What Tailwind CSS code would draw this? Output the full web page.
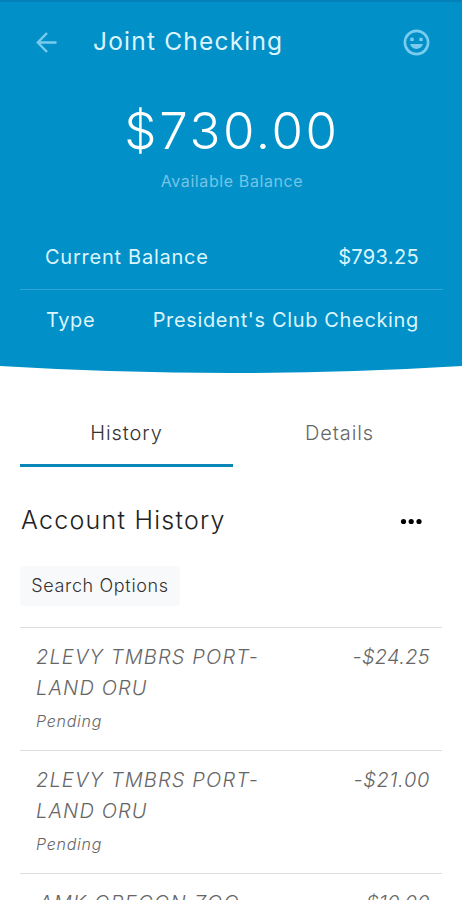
<!DOCTYPE html>
<html lang="en">

<head>
    <meta charset="UTF-8">
    <meta name="viewport" content="width=device-width, initial-scale=1.0">
    <title>Joint Checking</title>
    <script src="https://cdn.jsdelivr.net/npm/@tailwindcss/browser@4"></script>
</head>

<body class="bg-white font-['Inter','Open_Sans',sans-serif] h-[900px] overflow-hidden">

    <header class="bg-[#0290c8] border-t-2 border-[#0581b9] h-[366px] flex flex-col text-[#dcf5fd]">
        <div class="h-20 pl-[35px] pr-[30px] flex items-center">
            <svg class="size-6 text-[#7accee]" viewBox="0 0 24 24" fill="none" stroke="currentColor" stroke-width="2.400">
                <path d="M21.500 12.500H3.500M12 3L2.800 12.500l9.200 9.500" />
            </svg>
            <h1 class="ml-[34px] pb-[2px] text-[24.5px] tracking-[1.2px] whitespace-nowrap">Joint Checking</h1>
            <svg class="ml-auto size-[31px] text-[#7accee]" viewBox="0 0 24 24" fill="currentColor">
                <path d="M12 2a10 10 0 1 0 0 20 10 10 0 0 0 0-20zm0 18a8 8 0 1 1 0-16 8 8 0 0 1 0 16z" />
                <path d="M7.200 8.300h2.600v2.600H7.200zM14.200 8.300h2.600v2.600h-2.600zM7 13.200h10c-.6 2.400-2.500 3.800-5 3.800s-4.400-1.400-5-3.800z" />
            </svg>
        </div>

        <div class="pt-[18px] text-center">
            <p class="pl-[2px] text-[51px] leading-[62px] tracking-[2.6px] font-light text-white">$730.00</p>
            <p class="mt-[7px] pl-[2px] text-base leading-6 tracking-[0.6px] text-[#74c4e6]">Available Balance</p>
        </div>

        <div class="ml-5 mr-[19px] mt-[31px] text-[20px]">
            <div class="h-[66px] pl-[25px] pr-6 flex items-center justify-between border-b border-[#2ea5d5]">
                <span class="tracking-[0.75px]">Current Balance</span>
                <span class="tracking-[0.35px]">$793.25</span>
            </div>
            <div class="h-[60px] pl-[26px] pr-6 flex items-center justify-between">
                <span class="tracking-[0.6px]">Type</span>
                <span class="tracking-[0.65px]">President's Club Checking</span>
            </div>
        </div>
    </header>
    <svg class="block w-full h-2" viewBox="0 0 462 8" preserveAspectRatio="none">
        <path d="M0 0Q231 14 462 0z" fill="#0290c8" />
    </svg>

    <main class="px-5 pt-[26px] text-[#333]">
        <nav class="grid grid-cols-2 text-center text-[20px] tracking-[0.9px] mr-[-4px]">
            <a class="h-[67px] pt-[17px] leading-8 font-light border-b-[3px] border-[#0a85b7]">History</a>
            <a class="h-[67px] pt-[17px] leading-8 font-light text-[#666]">Details</a>
        </nav>

        <div class="mt-[34px] h-10 flex items-center justify-between">
            <h2 class="pl-px text-[25px] font-light tracking-[1.25px] text-[#222]">Account History</h2>
            <svg class="mr-5 w-[22px] h-2" viewBox="0 0 22 8" fill="#000">
                <circle cx="3.500" cy="4.500" r="2.600" />
                <circle cx="11.200" cy="4.500" r="2.600" />
                <circle cx="19" cy="4.500" r="2.600" />
            </svg>
        </div>

        <button class="mt-[25px] pb-[2px] block w-40 h-[40px] bg-[#f7f9fb] rounded text-[18px] font-light tracking-[0.65px] whitespace-nowrap">Search Options</button>

        <ul class="mt-[21px] text-[#666] font-light italic text-[20px]">
            <li class="h-[123px] border-t border-[#dedede] pl-4 pr-3 pt-[14px] flex justify-between leading-[31px]">
                <div>
                    <p class="tracking-[1.15px]">2LEVY TMBRS PORT-<br>LAND ORU</p>
                    <p class="mt-[2px] text-base leading-[30px] tracking-[0.75px]">Pending</p>
                </div>
                <span class="tracking-[0.3px]">-$24.25</span>
            </li>
            <li class="h-[123px] border-t border-[#dedede] pl-4 pr-3 pt-[14px] flex justify-between leading-[31px]">
                <div>
                    <p class="tracking-[1.15px]">2LEVY TMBRS PORT-<br>LAND ORU</p>
                    <p class="mt-[2px] text-base leading-[30px] tracking-[0.75px]">Pending</p>
                </div>
                <span class="tracking-[0.7px]">-$21.00</span>
            </li>
            <li class="h-[123px] border-t border-[#dedede] pl-[19px] pr-3 pt-[14px] flex justify-between leading-[31px]">
                <p class="tracking-[1.3px]">AMK OREGON ZOO</p>
                <span class="tracking-[0.3px]">-$10.00</span>
            </li>
        </ul>
    </main>

</body>

</html>
